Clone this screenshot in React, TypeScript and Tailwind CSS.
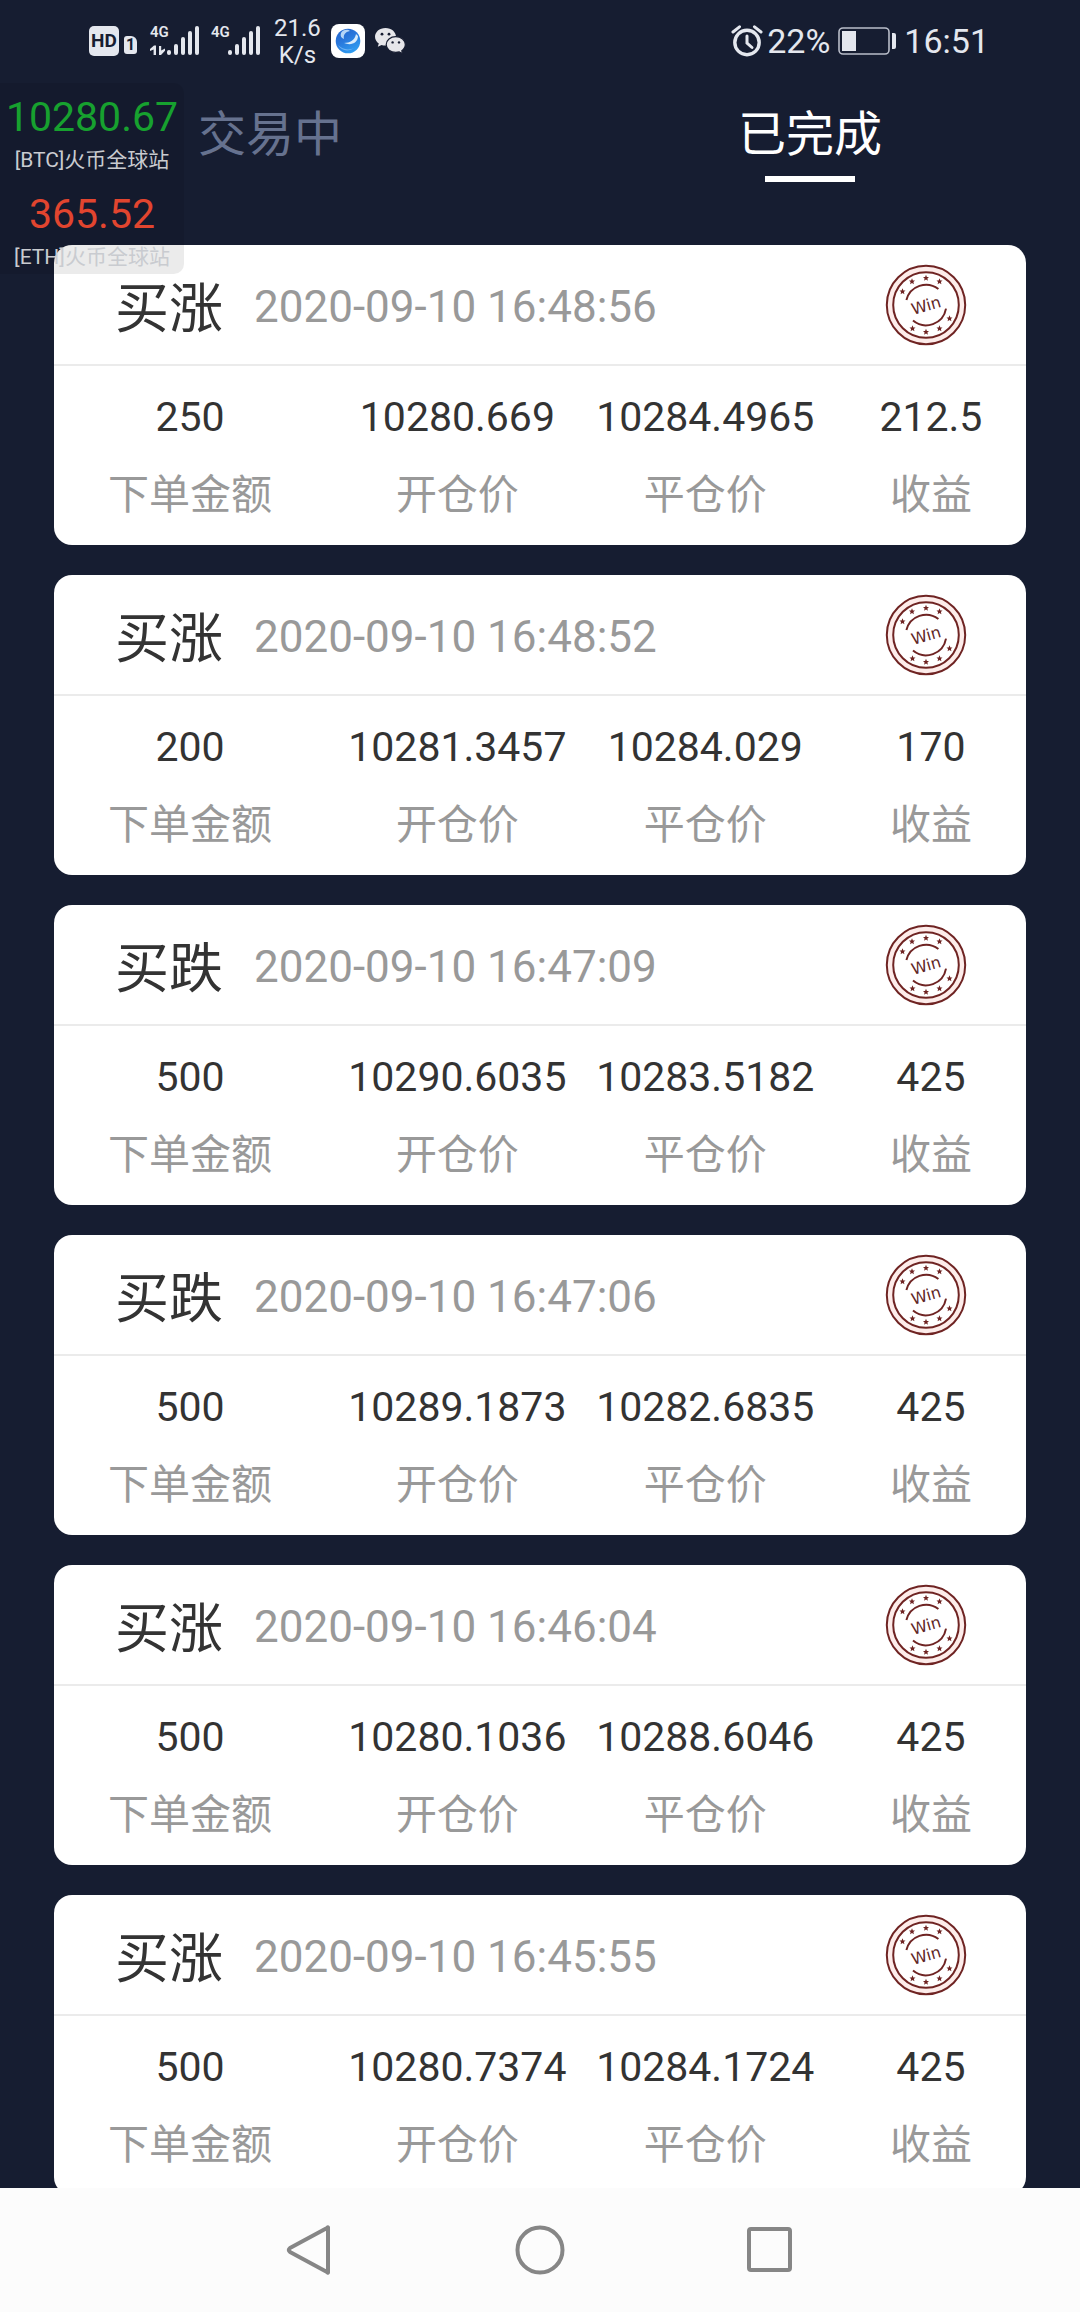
import React from "react";

type Trade = {
  side: string;
  time: string;
  amount: string;
  open: string;
  close: string;
  profit: string;
};

const trades: Trade[] = [
  { side: "买涨", time: "2020-09-10 16:48:56", amount: "250", open: "10280.669", close: "10284.4965", profit: "212.5" },
  { side: "买涨", time: "2020-09-10 16:48:52", amount: "200", open: "10281.3457", close: "10284.029", profit: "170" },
  { side: "买跌", time: "2020-09-10 16:47:09", amount: "500", open: "10290.6035", close: "10283.5182", profit: "425" },
  { side: "买跌", time: "2020-09-10 16:47:06", amount: "500", open: "10289.1873", close: "10282.6835", profit: "425" },
  { side: "买涨", time: "2020-09-10 16:46:04", amount: "500", open: "10280.1036", close: "10288.6046", profit: "425" },
  { side: "买涨", time: "2020-09-10 16:45:55", amount: "500", open: "10280.7374", close: "10284.1724", profit: "425" },
];

const STAR = "M0 -3.2 L0.9 -1.1 L3 -1 L1.4 0.5 L1.9 2.7 L0 1.5 L-1.9 2.7 L-1.4 0.5 L-3 -1 L-0.9 -1.1 Z";
const STARS = [
  [-23.5, -13.5],
  [-14, -23.5],
  [0, -27],
  [13.5, -23.5],
  [23.5, 13.5],
  [13.5, 23.5],
  [0, 27],
  [-13.5, 23.5],
];

function WinStamp() {
  return (
    <svg viewBox="-41 -41 82 82" className="size-[82px] shrink-0" role="img" aria-label="Win">
      <circle r="36.2" fill="none" stroke="#fdecea" strokeWidth="6" />
      <circle r="39.2" fill="none" stroke="#6f2423" strokeWidth="2" />
      <circle r="32.8" fill="none" stroke="#6f2423" strokeWidth="2" />
      <path d="M-19.6 -5 A20.3 20.3 0 0 1 12.4 -16" fill="none" stroke="#6f2423" strokeWidth="2" />
      <path d="M-13 15.6 A20.3 20.3 0 0 0 20 3.6" fill="none" stroke="#6f2423" strokeWidth="2" />
      {STARS.map(([x, y]) => (
        <path key={`${x},${y}`} d={STAR} transform={`translate(${x} ${y})`} fill="#6f2423" />
      ))}
      <text
        transform="rotate(-16)"
        y="6"
        textAnchor="middle"
        fontSize="16"
        fontFamily="'DejaVu Sans', sans-serif"
        fill="#5f2626"
      >
        Win
      </text>
    </svg>
  );
}

function Signal({ arrows }: { arrows?: boolean }) {
  return (
    <div className="relative">
      <span className="absolute -top-[3px] left-0 text-[15px] leading-[20px] font-semibold">4G</span>
      <svg viewBox="0 0 50 32" className="h-8 w-[50px]" fill="currentColor" aria-hidden="true">
        {arrows && <path d="M0 24 L4 20.5 H6 V30 H3.6 V24.6 L0 26 Z M9 21 H11.2 V25.5 L15 23.5 V25.8 L11 30 H9 Z" />}
        <rect x="17" y="25" width="4" height="5" rx="2" />
        <rect x="24" y="19" width="4" height="11" rx="2" />
        <rect x="31" y="12" width="4" height="18" rx="2" />
        <rect x="38" y="6" width="4" height="24" rx="2" />
        <rect x="45" y="1" width="4" height="29" rx="2" />
      </svg>
    </div>
  );
}

function StatusBar() {
  return (
    <header className="flex h-[82px] shrink-0 items-center justify-between pr-[91px] pl-[89px] text-[#e4e7ee]">
      <div className="flex items-center">
        <span className="flex size-[30px] items-center justify-center rounded-[5px] bg-[#e4e7ee] text-[19px] font-bold text-[#171d31]">
          HD
        </span>
        <span className="mt-2 ml-[5px] flex h-[18px] w-[13px] items-center justify-center rounded-[3px] rounded-tr-[6px] bg-[#e4e7ee] text-[16px] font-bold text-[#171d31]">
          1
        </span>
        <div className="ml-[13px]">
          <Signal arrows />
        </div>
        <div className="ml-[11px]">
          <Signal />
        </div>
        <div className="ml-[13px] pt-[2px] text-center text-[24px] leading-[27px]">
          <div>21.6</div>
          <div>K/s</div>
        </div>
        <svg viewBox="0 0 34 34" className="ml-[10px] size-[34px]" aria-hidden="true">
          <defs>
            <linearGradient id="globe" x1="0" y1="0" x2="0.6" y2="1">
              <stop offset="0" stopColor="#1f5fc9" />
              <stop offset="0.5" stopColor="#2a78dc" />
              <stop offset="1" stopColor="#2f9cf0" />
            </linearGradient>
          </defs>
          <rect width="34" height="34" rx="8" fill="#fff" />
          <circle cx="17" cy="17" r="12.3" fill="url(#globe)" />
          <path d="M10 9 C12 5 17 5 19 7 C14 8 12 11 13 15 C10 14 9 12 10 9 Z" fill="#b5d5f7" />
          <path d="M27 12 C27 19 20 22 13 19 C19 19 24 16 25 10 Z" fill="#d9ecfc" />
          <path d="M7 21 C11 25 17 27 23 24 C18 28 10 27 7 21 Z" fill="#6fb2f3" />
        </svg>
        <svg viewBox="0 0 32 28" className="ml-[9px] h-7 w-8" aria-hidden="true">
          <path
            d="M11.5 1 C5.4 1 1 5 1 9.8 C1 12.6 2.5 15 4.8 16.6 L3.8 19.8 L7.6 17.9 C9 18.3 10.4 18.5 11.8 18.4 C18 18.2 22 14.3 22 9.8 C22 5 17.5 1 11.5 1 Z"
            fill="#e6e6ea"
          />
          <path
            d="M21.8 9.6 C16.4 9.6 12.2 13.2 12.2 17.6 C12.2 22 16.4 25.4 21.8 25.4 C23 25.4 24.1 25.2 25.2 24.9 L28.6 26.8 L27.8 23.8 C29.9 22.3 31.3 20.1 31.3 17.6 C31.3 13.2 27.2 9.6 21.8 9.6 Z"
            fill="#e6e6ea"
            stroke="#171d31"
            strokeWidth="1.2"
          />
          <circle cx="8" cy="7.2" r="1.4" fill="#171d31" />
          <circle cx="15" cy="7.2" r="1.4" fill="#171d31" />
          <circle cx="18.6" cy="15.4" r="1.2" fill="#171d31" />
          <circle cx="25" cy="15.4" r="1.2" fill="#171d31" />
        </svg>
      </div>
      <div className="flex items-center text-[34px] leading-none">
        <svg viewBox="0 0 32 32" className="size-8" fill="none" stroke="#e4e7ee" aria-hidden="true">
          <circle cx="16" cy="17.5" r="12.2" strokeWidth="3.4" />
          <path d="M16 11 V18 L21 22.5" strokeWidth="3" strokeLinecap="round" />
          <path d="M2 7 L8.5 1.8 M30 7 L23.5 1.8" strokeWidth="3" strokeLinecap="round" />
        </svg>
        <span className="ml-1">22%</span>
        <svg viewBox="0 0 60 28" className="ml-2 h-7 w-[60px]" aria-hidden="true">
          <rect x="1" y="1" width="50" height="26" rx="4" fill="none" stroke="#b9bdc9" strokeWidth="1.6" />
          <rect x="4" y="4" width="14" height="20" fill="#e4e7ee" />
          <path d="M54 6 H56 Q58 6 58 8 V20 Q58 22 56 22 H54 Z" fill="#e4e7ee" />
        </svg>
        <span className="ml-[6px]">16:51</span>
      </div>
    </header>
  );
}

function Tabs() {
  return (
    <div role="tablist" className="grid h-[163px] shrink-0 grid-cols-2 items-start text-[48px] leading-[64px]">
      <button type="button" role="tab" aria-selected={false} className="pt-[21px] text-[#66728f]">
        交易中
      </button>
      <button type="button" role="tab" aria-selected={true} className="flex flex-col items-center gap-[9px] pt-[21px] text-white">
        已完成
        <span className="h-[6px] w-[90px] bg-white" />
      </button>
    </div>
  );
}

function Field({ label, value, className = "" }: { label: string; value: string; className?: string }) {
  return (
    <div className={`flex flex-col-reverse items-center gap-[18px] ${className}`}>
      <dt className="text-[#999]">{label}</dt>
      <dd className="text-[#333]">{value}</dd>
    </div>
  );
}

function TradeCard({ trade }: { trade: Trade }) {
  return (
    <article className="shrink-0 rounded-[18px] bg-white">
      <div className="flex h-[121px] items-center border-b-2 border-[#ebebeb] pr-[59px] pl-[61px]">
        <h2 className="pt-[10px] text-[54px] leading-[80px] text-[#333]">{trade.side}</h2>
        <time className="ml-[31px] pt-1 text-[44px] text-[#999]">{trade.time}</time>
        <div className="ml-auto">
          <WinStamp />
        </div>
      </div>
      <dl className="grid grid-cols-[28%_27%_24%_21%] pt-[21px] pb-5 text-[41px] leading-[60px]">
        <Field label="下单金额" value={trade.amount} />
        <Field label="开仓价" value={trade.open} />
        <Field label="平仓价" value={trade.close} />
        <Field label="收益" value={trade.profit} className="pl-[14px]" />
      </dl>
    </article>
  );
}

function Quote({ price, name, color }: { price: string; name: string; color: string }) {
  return (
    <div className="flex flex-col items-center">
      <span className={`text-[41px] leading-[52px] ${color}`}>{price}</span>
      <span className="text-[21px] leading-[34px] text-[#c9cbd0]">{name}</span>
    </div>
  );
}

function PriceWidget() {
  return (
    <aside className="absolute top-[83px] left-0 z-10 flex w-[184px] flex-col gap-[11px] rounded-r-[10px] bg-black/8 pt-2">
      <Quote price="10280.67" name="[BTC]火币全球站" color="text-[#17a12f]" />
      <Quote price="365.52" name="[ETH]火币全球站" color="text-[#e2452f]" />
    </aside>
  );
}

function NavBar() {
  return (
    <nav className="flex h-[124px] shrink-0 items-center justify-center gap-[180px] bg-[#fcfcfc]">
      <button type="button" aria-label="返回">
        <svg viewBox="0 0 50 50" className="size-[50px]" fill="none" stroke="#868686" strokeWidth="4" strokeLinejoin="round">
          <path d="M43 2.5 V47.5 Q43 48 42 47 L5 27 Q2.5 25 5 23 L42 3 Q43 2 43 2.5 Z" />
        </svg>
      </button>
      <button type="button" aria-label="主屏幕">
        <svg viewBox="0 0 50 50" className="size-[50px]" fill="none" stroke="#868686" strokeWidth="4">
          <circle cx="25" cy="25" r="22.5" />
        </svg>
      </button>
      <button type="button" aria-label="最近任务">
        <svg viewBox="0 0 50 50" className="size-[50px]" fill="none" stroke="#868686" strokeWidth="4">
          <rect x="4" y="4" width="41" height="41" rx="2" />
        </svg>
      </button>
    </nav>
  );
}

export default function App() {
  return (
    <div className="relative flex h-screen flex-col overflow-hidden bg-[#161d31] font-['Roboto','Noto_Sans_CJK_SC',sans-serif]">
      <StatusBar />
      <Tabs />
      <main className="flex min-h-0 flex-1 flex-col gap-[30px] overflow-y-auto px-[5%] [scrollbar-width:none]">
        {trades.map((t) => (
          <TradeCard key={t.time} trade={t} />
        ))}
      </main>
      <NavBar />
      <PriceWidget />
    </div>
  );
}
